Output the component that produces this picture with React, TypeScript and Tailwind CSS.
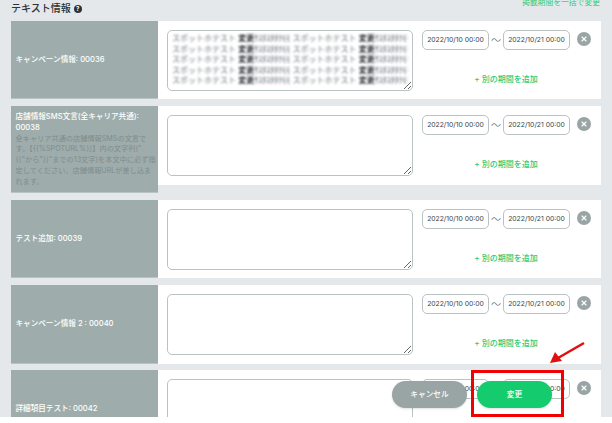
import React from "react";
import { X } from "lucide-react";

const jp = "font-['Inter','Noto_Sans_CJK_JP',sans-serif]";

const fields = [
  { id: 1, label: "キャンペーン情報: 00036", filled: true, h: "h-[78px]", mb: "mb-[7px]" },
  { id: 2, label: "店舗情報SMS文言(全キャリア共通): 00038", note: "全キャリア共通の店舗情報SMSの文言で\nす。【{{%SPOTURL%}}】内の文字列(\"\n{{\"から\"}}\"までの13文字)を本文中に必ず指\n定してください。店舗情報URLが差し込ま\nれます。", h: "h-[79px]", mb: "mb-[7px]" },
  { id: 3, label: "テスト追加: 00039", h: "h-[78px]", mb: "mb-[7px]" },
  { id: 4, label: "キャンペーン情報 2 : 00040", h: "h-[79px]", mb: "mb-[6px]" },
  { id: 5, label: "詳細項目テスト: 00042", h: "h-[79px]", mb: "mb-0" },
];

// the reference has this text blurred out
const BlurChunk = () => (
  <span>
    スポットホテスト <b className="text-[#1c2025]">変更</b>
    <span className="text-[#4f5862]">ｻｽﾀｽﾀﾀｸﾓﾓ</span>{" "}
  </span>
);

const DateBox = ({ value }: { value: string }) => (
  <div className="flex h-[20px] w-[67px] items-center justify-center rounded-[5px] border border-[#b9c3c2] bg-white text-[6.8px] text-[#3a4548]">
    {value}
  </div>
);

const Row = ({ field }: { field: (typeof fields)[number] }) => (
  <div className={`flex items-start ${field.mb}`}>
    <div className={`flex w-[147px] shrink-0 flex-col justify-center border-b border-[#b9c3c2] bg-[#9eadab] px-[4.5px] ${field.note ? "h-[87px]" : field.h}`}>
      <div className="text-[7.6px] leading-[11.5px] font-medium text-white">{field.label}</div>
      {field.note && <div className="text-[7.2px] leading-[10.8px] whitespace-pre text-[#7e8c8b]">{field.note}</div>}
    </div>
    <div className={`flex flex-1 bg-white pt-[9px] pl-[9px] ${field.h}`}>
      <div className="relative h-[61px] w-[246px] shrink-0">
        <textarea readOnly className="block h-full w-full rounded-[5px] border border-[#b9c3c2] bg-white" />
        {field.filled && (
          <div className="pointer-events-none absolute inset-x-[5px] top-[3px] overflow-hidden text-[8px] leading-[10.5px] whitespace-nowrap text-[#71787f] blur-[1.3px]">
            {[0, 1, 2, 3, 4].map((line) => (
              <div key={line}>
                <BlurChunk />
                <BlurChunk />
              </div>
            ))}
          </div>
        )}
      </div>
      <div className="ml-[9px] flex w-[147px] flex-col items-center">
        <div className="flex items-center self-start">
          <DateBox value="2022/10/10 00:00" />
          <span className="w-[14px] text-center text-[10px] font-light text-[#3a4548]">〜</span>
          <DateBox value="2022/10/21 00:00" />
        </div>
        <div className="mt-[23px] pl-[21px] text-[8px] font-medium text-[#2ccb74]">+ 別の期間を追加</div>
      </div>
      <div className="mt-[2px] ml-[8px] flex h-[14px] w-[14px] items-center justify-center rounded-full bg-[#98a5a4]">
        <X size={8} strokeWidth={3.5} className="text-white" />
      </div>
    </div>
  </div>
);

export default function App() {
  return (
    <div className={`relative h-[423px] w-[612px] overflow-hidden bg-white ${jp}`}>
      <div className="h-[417px] overflow-hidden bg-[#e4e8ea] px-[11px]">
        <div className="flex h-[21px] items-start justify-between">
          <div className="mt-[1px] flex items-center gap-[3px] text-[10px] font-medium text-[#2a343a]">
            テキスト情報
            <span className="flex h-[8px] w-[8px] items-center justify-center rounded-full bg-[#2a343a] text-[6px] font-bold text-white">?</span>
          </div>
          <div className="-mt-[3px] pr-[1px] text-[7.8px] text-[#2ccb74]">掲載期間を一括で変更</div>
        </div>
        {fields.map((field) => (
          <Row key={field.id} field={field} />
        ))}
      </div>

      {/* footer buttons */}
      <div className="absolute top-[381px] left-[392px] flex items-center">
        <div className="flex h-[27px] w-[75px] items-center justify-center rounded-full bg-[#98a5a4] text-[7.7px] font-medium text-white shadow-sm">キャンセル</div>
        <div className="ml-[10px] flex h-[27px] w-[75px] items-center justify-center rounded-full bg-[#14cc6e] text-[7.7px] font-medium text-white shadow-sm">変更</div>
      </div>

      {/* red annotation */}
      <div className="absolute top-[370px] left-[471px] h-[47px] w-[93px] border-[3px] border-[#f00000]" />
      <svg className="absolute top-[340px] left-[548px]" width="38" height="26" viewBox="0 0 38 26">
        <path d="M36 3 L10 18" stroke="#e01010" strokeWidth="2.5" fill="none" />
        <path d="M2 23 L7 12 L14 21 Z" fill="#e01010" />
      </svg>
    </div>
  );
}
